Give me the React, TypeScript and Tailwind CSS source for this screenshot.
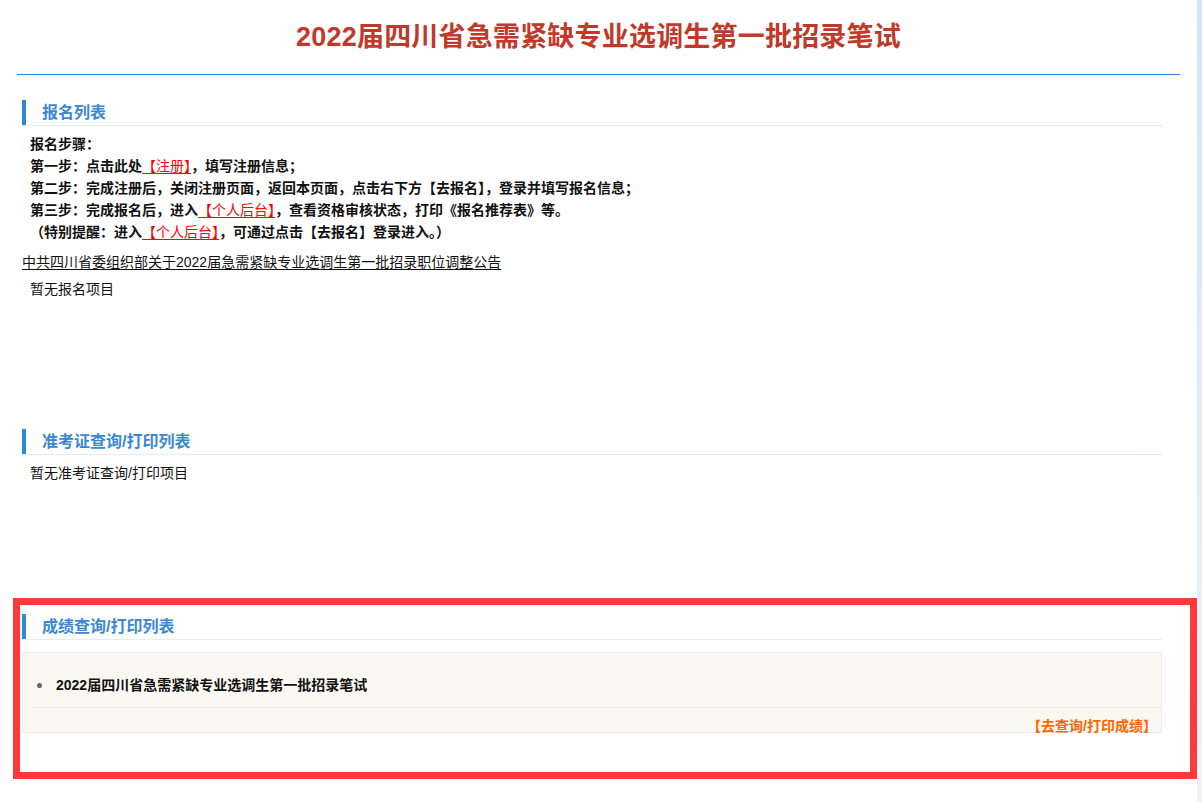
import React from "react";

const FONT = "font-['Liberation_Sans','Noto_Sans_CJK_SC',sans-serif]";

interface SectionTitleProps {
  title: string;
}

const SectionTitle: React.FC<SectionTitleProps> = ({ title }) => (
  <div className="flex items-stretch h-[26px] border-b border-[#e6eaf1]">
    <span className="w-1 bg-[#2f88d6]" />
    <span className="ml-4 self-center text-[16px] font-bold leading-none text-[#3a87d4]">
      {title}
    </span>
  </div>
);

const RedLink: React.FC<{ text: string }> = ({ text }) => (
  <a href="#" className="font-normal text-[#ff0000] underline underline-offset-2">
    {text}
  </a>
);

const App: React.FC = () => {
  return (
    <div className={`relative flex min-h-[802px] bg-white ${FONT}`}>
      {/* Main page column */}
      <main className="w-[1197px] shrink-0 bg-white">
        {/* Page title */}
        <div className="flex h-[74px] items-center justify-center">
          <h1 className="text-[27px] font-bold tracking-[0.2px] text-[#c0392b]">
            2022届四川省急需紧缺专业选调生第一批招录笔试
          </h1>
        </div>
        <div className="mx-[17px] h-px bg-[#2f88d6]" />

        <div className="ml-[22px] w-[1140px]">
          {/* Sign up list */}
          <section className="mt-[25px]">
            <SectionTitle title="报名列表" />
            <div className="pt-[7px] pl-2 text-[14px] font-bold leading-[22px] text-[#111]">
              <p>报名步骤：</p>
              <p>
                第一步：点击此处<RedLink text="【注册】" />，填写注册信息；
              </p>
              <p>第二步：完成注册后，关闭注册页面，返回本页面，点击右下方【去报名】，登录并填写报名信息；</p>
              <p>
                第三步：完成报名后，进入<RedLink text="【个人后台】" />，查看资格审核状态，打印《报名推荐表》等。
              </p>
              <p>
                （特别提醒：进入<RedLink text="【个人后台】" />，可通过点击【去报名】登录进入。）
              </p>
            </div>
            <a
              href="#"
              className="mt-2 block text-[14px] leading-[22px] text-[#111] underline underline-offset-2"
            >
              中共四川省委组织部关于2022届急需紧缺专业选调生第一批招录职位调整公告
            </a>
            <p className="mt-[5px] pl-2 text-[14px] leading-[22px] text-[#111]">暂无报名项目</p>
          </section>

          {/* Admission ticket list */}
          <section className="mt-[129px]">
            <SectionTitle title="准考证查询/打印列表" />
            <p className="pt-[7px] pl-2 text-[14px] leading-[22px] text-[#111]">
              暂无准考证查询/打印项目
            </p>
          </section>

          {/* Score list */}
          <section className="mt-[130px]">
            <SectionTitle title="成绩查询/打印列表" />
            <div className="mt-[12px] border border-[#e8edf3] bg-[#fbf8f1]">
              <div className="ml-2 flex h-[55px] items-center border-b border-[#e8edf3] pt-[10px]">
                <span className="ml-[6px] h-[5px] w-[5px] rounded-full bg-[#666]" />
                <span className="ml-[14px] text-[14px] font-bold text-[#111]">
                  2022届四川省急需紧缺专业选调生第一批招录笔试
                </span>
              </div>
              <div className="flex h-[24px] items-end justify-end pr-[4px]">
                <a href="#" className="text-[14px] font-bold leading-[12px] text-[#ff6600]">
                  【去查询/打印成绩】
                </a>
              </div>
            </div>
          </section>
        </div>
      </main>

      {/* Right edge strip */}
      <div className="flex-1 bg-gradient-to-b from-[#d3e6f5] to-[#eef2f8]" />

      {/* Highlight frame over the score section */}
      <div className="pointer-events-none absolute left-[13px] top-[598px] h-[181px] w-[1184px] border-[7px] border-[#fc3a3a]" />
    </div>
  );
};

export default App;
